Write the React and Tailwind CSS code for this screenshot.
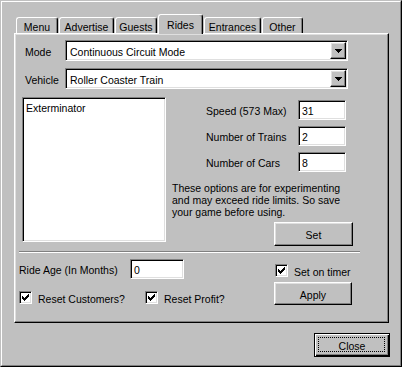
import React from "react";

const raised =
  "border border-t-white border-l-white border-r-black border-b-black shadow-[inset_-1px_-1px_#808080,inset_1px_1px_#dfdfdf] bg-[#c0c0c0]";
const sunken =
  "border border-t-[#808080] border-l-[#808080] border-r-white border-b-white shadow-[inset_1px_1px_#000,inset_-1px_-1px_#dfdfdf] bg-white";

function Check() {
  return (
    <svg width="7" height="7" viewBox="0 0 7 7" shapeRendering="crispEdges">
      <rect x="0" y="2" width="1" height="3" fill="#000" />
      <rect x="1" y="3" width="1" height="3" fill="#000" />
      <rect x="2" y="4" width="1" height="3" fill="#000" />
      <rect x="3" y="3" width="1" height="3" fill="#000" />
      <rect x="4" y="2" width="1" height="3" fill="#000" />
      <rect x="5" y="1" width="1" height="3" fill="#000" />
      <rect x="6" y="0" width="1" height="3" fill="#000" />
    </svg>
  );
}

function CheckBox() {
  return (
    <div className={`${sunken} w-[13px] h-[13px] flex items-center justify-center shrink-0`}>
      <Check />
    </div>
  );
}

function Combo({ text }) {
  return (
    <div className={`${sunken} w-[283px] h-[21px] flex items-stretch p-[1px]`}>
      <div className="flex-1 flex items-center pl-[3px] pt-[2px] whitespace-nowrap">{text}</div>
      <div className={`${raised} w-[16px] flex items-center justify-center`}>
        <svg width="7" height="4" viewBox="0 0 7 4" shapeRendering="crispEdges">
          <rect x="0" y="0" width="7" height="1" fill="#000" />
          <rect x="1" y="1" width="5" height="1" fill="#000" />
          <rect x="2" y="2" width="3" height="1" fill="#000" />
          <rect x="3" y="3" width="1" height="1" fill="#000" />
        </svg>
      </div>
    </div>
  );
}

function Field({ value, w }) {
  return (
    <div className={`${sunken} ${w} h-[20px] flex items-center pl-[3px] pt-[2px]`}>{value}</div>
  );
}

function Tab({ label, w, ml, selected }) {
  if (selected) {
    return (
      <div
        className={`relative z-10 ${w} ${ml} h-[20px] -mb-[1px] border-l border-t border-r border-l-white border-t-white border-r-black rounded-t-[3px] shadow-[inset_-1px_0_#808080] bg-[#c0c0c0] flex items-start justify-center pt-[4px]`}
      >
        {label}
      </div>
    );
  }
  return (
    <div
      className={`${w} ${ml} h-[16px] border-l border-t border-r border-l-white border-t-white border-r-black rounded-t-[3px] shadow-[inset_-1px_0_#808080] bg-[#c0c0c0] flex items-start justify-center pt-[3px]`}
    >
      {label}
    </div>
  );
}

export default function App() {
  return (
    <div className="w-[402px] h-[367px] bg-[#c0c0c0] text-black font-['Liberation_Sans',Arial,sans-serif] text-[10.5px] leading-[12px] border border-t-[#c0c0c0] border-l-[#c0c0c0] border-r-black border-b-black">
      <div className="w-full h-full border border-t-white border-l-white border-r-[#808080] border-b-[#808080] flex flex-col">
        {/* tabs */}
        <div className="mt-[12px] ml-[14px] h-[19px] flex items-end">
          <Tab label="Menu" w="w-[42px]" ml="ml-0" />
          <Tab label="Advertise" w="w-[55px]" ml="ml-[1px]" />
          <Tab label="Guests" w="w-[42px]" ml="ml-[1px]" />
          <Tab label="Rides" w="w-[45px]" ml="ml-[1px]" selected />
          <Tab label="Entrances" w="w-[57px]" ml="ml-[1px]" />
          <Tab label="Other" w="w-[41px]" ml="ml-[1px]" />
        </div>
        {/* panel */}
        <div className="ml-[12px] w-[375px] h-[290px] border border-t-white border-l-white border-r-black border-b-black shadow-[inset_-1px_-1px_#808080,inset_1px_1px_#dfdfdf] flex flex-col pt-[6px]">
          <div className="ml-[10px] flex items-center">
            <span className="w-[40px] pt-[2px]">Mode</span>
            <Combo text="Continuous Circuit Mode" />
          </div>
          <div className="mt-[7px] ml-[10px] flex items-center">
            <span className="w-[40px] pt-[2px]">Vehicle</span>
            <Combo text="Roller Coaster Train" />
          </div>
          <div className="mt-[8px] ml-[7px] flex items-start">
            <div className={`${sunken} w-[144px] h-[145px] pl-[3px] pt-[4px]`}>Exterminator</div>
            <div className="ml-[6px] pt-[3px] flex flex-col">
              <div className="flex items-center h-[20px]">
                <span className="w-[126px] pl-[34px] pt-[2px]">Speed (573 Max)</span>
                <Field value="31" w="w-[48px]" />
              </div>
              <div className="flex items-center h-[20px] mt-[6px]">
                <span className="w-[126px] pl-[34px] pt-[2px]">Number of Trains</span>
                <Field value="2" w="w-[48px]" />
              </div>
              <div className="flex items-center h-[20px] mt-[6px]">
                <span className="w-[126px] pl-[34px] pt-[2px]">Number of Cars</span>
                <Field value="8" w="w-[48px]" />
              </div>
              <p className="mt-[10px] w-[190px]">
                These options are for experimenting
                <br />
                and may exceed ride limits. So save
                <br />
                your game before using.
              </p>
              <div className={`${raised} mt-[4px] ml-[102px] w-[79px] h-[24px] pt-[2px] flex items-center justify-center`}>
                Set
              </div>
            </div>
          </div>
          <div className="mt-[5px] ml-[4px] w-[341px] h-[2px] border-t border-t-[#808080] border-b border-b-white" />
          <div className="ml-[4px] flex">
            <div className="w-[255px] flex flex-col">
              <div className="mt-[6px] flex items-center h-[20px]">
                <span className="w-[111px] pt-[2px]">Ride Age (In Months)</span>
                <Field value="0" w="w-[54px]" />
              </div>
              <div className="mt-[12px] flex items-center h-[13px]">
                <div className="w-[126px] flex items-center">
                  <CheckBox />
                  <span className="ml-[6px] pt-[2px]">Reset Customers?</span>
                </div>
                <div className="flex items-center">
                  <CheckBox />
                  <span className="ml-[6px] pt-[2px]">Reset Profit?</span>
                </div>
              </div>
            </div>
            <div className="flex flex-col">
              <div className="mt-[11px] ml-[1px] flex items-center h-[13px]">
                <CheckBox />
                <span className="ml-[6px] pt-[2px]">Set on timer</span>
              </div>
              <div className={`${raised} mt-[5px] w-[78px] h-[23px] pt-[2px] flex items-center justify-center`}>
                Apply
              </div>
            </div>
          </div>
        </div>
        {/* close */}
        <div className="mt-[10px] ml-[312px] relative w-[76px] h-[24px] border border-black bg-[#c0c0c0] shadow-[inset_1px_1px_#fff,inset_-1px_-1px_#000,inset_-2px_-2px_#808080] pt-[2px] flex items-center justify-center">
          <div className="absolute left-[3px] top-[3px] right-[4px] bottom-[4px] border border-dotted border-black" />
          Close
        </div>
      </div>
    </div>
  );
}
